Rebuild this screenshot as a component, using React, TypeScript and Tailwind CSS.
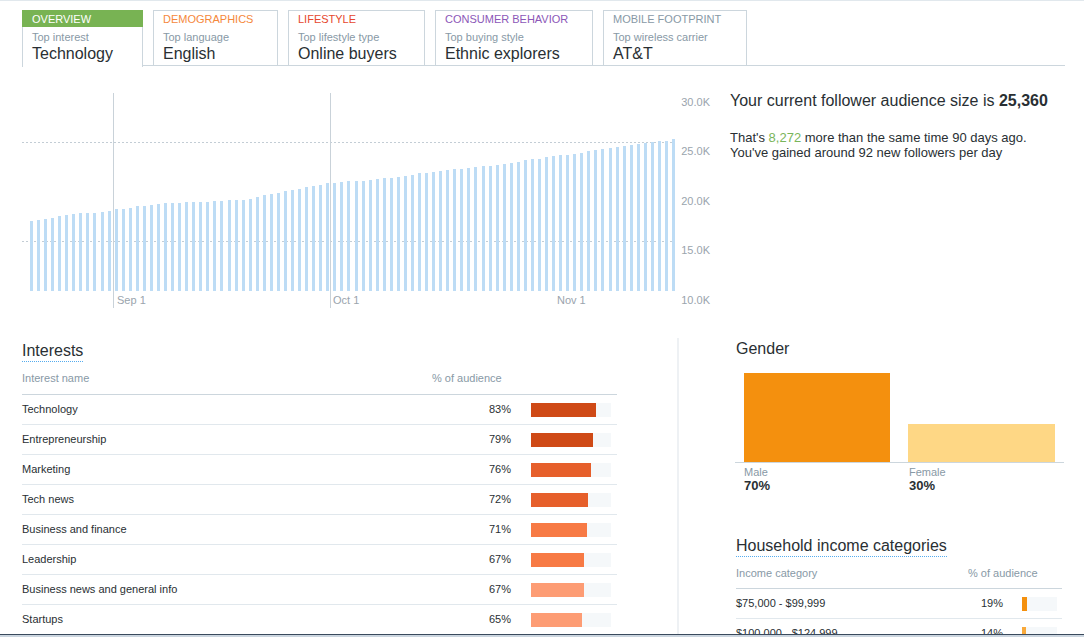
import React from "react";

const tabs = [
  { label: "OVERVIEW", sub: "Top interest", value: "Technology", width: "w-[121px]", color: "text-white", active: true },
  { label: "DEMOGRAPHICS", sub: "Top language", value: "English", width: "w-[125px]", color: "text-[#f5883b]" },
  { label: "LIFESTYLE", sub: "Top lifestyle type", value: "Online buyers", width: "w-[137px]", color: "text-[#e6472d]" },
  { label: "CONSUMER BEHAVIOR", sub: "Top buying style", value: "Ethnic explorers", width: "w-[158px]", color: "text-[#8c57b8]" },
  { label: "MOBILE FOOTPRINT", sub: "Top wireless carrier", value: "AT&T", width: "w-[144px]", color: "text-[#8899a6]" },
];

// daily follower bars, heights in px above the 10K axis
const heights = [
  70, 71, 72, 73, 75, 76, 77, 78, 78, 78, 79, 80, 82, 82, 83, 85, 86, 87, 88, 88, 88, 89, 89, 89, 89, 90, 90, 91, 91, 91,
  92, 94, 96, 97, 98, 100, 101, 102, 104, 105, 106, 108, 108, 109, 110, 110, 111, 112, 113, 113, 114, 115, 116, 118, 118,
  119, 120, 121, 122, 122, 123, 124, 125, 125, 126, 127, 128, 129, 131, 132, 132, 134, 135, 136, 137, 138, 140, 141, 142,
  143, 144, 145, 146, 147, 148, 149, 150, 150, 152,
];
const BAR_COUNT = 92;
const bars = Array.from({ length: BAR_COUNT }, (_, i) => ({
  x: Math.round(30 + (i * 642) / (BAR_COUNT - 1)),
  h: heights[Math.round((i * (heights.length - 1)) / (BAR_COUNT - 1))],
}));

const yTicks = [
  { label: "30.0K", y: 102 },
  { label: "25.0K", y: 151 },
  { label: "20.0K", y: 201 },
  { label: "15.0K", y: 250 },
  { label: "10.0K", y: 300 },
];

const interests = [
  { name: "Technology", pct: 83, color: "#cf4a16" },
  { name: "Entrepreneurship", pct: 79, color: "#cf4a16" },
  { name: "Marketing", pct: 76, color: "#e65f2b" },
  { name: "Tech news", pct: 72, color: "#e65f2b" },
  { name: "Business and finance", pct: 71, color: "#f77a45" },
  { name: "Leadership", pct: 67, color: "#f77a45" },
  { name: "Business news and general info", pct: 67, color: "#fd9c74" },
  { name: "Startups", pct: 65, color: "#fd9c74" },
];

const incomes = [
  { name: "$75,000 - $99,999", pct: 19, color: "#f4900e" },
  { name: "$100,000 - $124,999", pct: 14, color: "#f9a93a" },
];

function Tab({ tab }: { tab: (typeof tabs)[number] }) {
  if (tab.active) {
    return (
      <div className={`${tab.width} h-[57px] shrink-0 flex flex-col bg-white`}>
        <div className="h-[17px] bg-[#78b353] px-[10px] pt-[3px] text-[11px] leading-[13px] text-white">
          {tab.label}
        </div>
        <div className="flex-1 border-x border-[#ccd6dd] px-[9px]">
          <div className="mt-[4px] text-[11px] leading-[13px] text-[#8899a6]">{tab.sub}</div>
          <div className="text-[16px] leading-[20px] text-[#292f33]">{tab.value}</div>
        </div>
      </div>
    );
  }
  return (
    <div className={`${tab.width} h-[56px] shrink-0 border border-[#ccd6dd] bg-white px-[9px]`}>
      <div className={`h-[16px] pt-[2px] text-[11px] leading-[13px] ${tab.color}`}>{tab.label}</div>
      <div className="mt-[4px] text-[11px] leading-[13px] text-[#8899a6]">{tab.sub}</div>
      <div className="text-[16px] leading-[20px] text-[#292f33]">{tab.value}</div>
    </div>
  );
}

function FollowerChart() {
  return (
    <svg width={722} height={235} viewBox="0 80 722 235" className="shrink-0">
      <line x1={22} x2={673} y1={142.5} y2={142.5} stroke="#c3cdd5" strokeDasharray="2 2" />
      <line x1={22} x2={673} y1={241.5} y2={241.5} stroke="#c3cdd5" strokeDasharray="2 2" />
      <line x1={113.5} x2={113.5} y1={93} y2={308} stroke="#c9d2d9" />
      <line x1={330.5} x2={330.5} y1={93} y2={308} stroke="#c9d2d9" />
      {bars.map((b, i) => (
        <rect key={i} x={b.x} y={291 - b.h} width={3} height={b.h} fill="#bddcf5" />
      ))}
      <g fontSize={11} fill="#9aa4ad" fontFamily="'Liberation Sans', Arial, sans-serif">
        <text x={117} y={304}>Sep 1</text>
        <text x={333} y={304}>Oct 1</text>
        <text x={557} y={304}>Nov 1</text>
        {yTicks.map((t) => (
          <text key={t.label} x={710} y={t.y + 4} textAnchor="end">
            {t.label}
          </text>
        ))}
      </g>
    </svg>
  );
}

function SectionTitle({ children }: { children: React.ReactNode }) {
  return (
    <div className="w-fit text-[16px] leading-[20px] text-[#292f33] border-b border-dotted border-[#55acee]">
      {children}
    </div>
  );
}

export default function App() {
  return (
    <div className="h-[637px] flex flex-col overflow-hidden bg-white border-t border-[#e1e8ed] font-['Liberation_Sans',Arial,sans-serif]">
      <div className="flex-1 min-h-0 overflow-hidden">
        {/* segment tabs */}
        <div className="flex items-start pt-[9px] pl-[22px] pr-[19px]">
          <Tab tab={tabs[0]} />
          <div className="flex-1 h-[56px] flex items-start gap-[10px] pl-[10px] border-b border-[#ccd6dd]">
            {tabs.slice(1).map((t) => (
              <Tab key={t.label} tab={t} />
            ))}
          </div>
        </div>

        {/* follower growth */}
        <div className="flex mt-[13px]">
          <FollowerChart />
          <div className="pl-[8px] pt-[11px] text-[#292f33]">
            <div className="text-[16px] leading-[20px]">
              Your current follower audience size is <span className="font-bold">25,360</span>
            </div>
            <div className="mt-[19px] text-[13px] leading-[15px]">
              That's <span className="text-[#79b55a]">8,272</span> more than the same time 90 days ago.
            </div>
            <div className="text-[13px] leading-[15px]">You've gained around 92 new followers per day</div>
          </div>
        </div>

        <div className="flex mt-[23px]">
          {/* interests table */}
          <div className="ml-[22px] w-[595px] pt-[3px] shrink-0">
            <SectionTitle>Interests</SectionTitle>
            <div className="flex pt-[10px] pb-[9px] border-b border-[#ccd6dd] text-[11px] leading-[13px] text-[#8899a6]">
              <div className="flex-1">Interest name</div>
              <div className="w-[185px]">% of audience</div>
            </div>
            {interests.map((r) => (
              <div key={r.name} className="h-[30px] flex items-center border-b border-[#e1e8ed] text-[11px] text-[#292f33]">
                <div className="flex-1">{r.name}</div>
                <div className="w-[80px] text-right">{r.pct}%</div>
                <div className="ml-[20px] mr-[6px] w-[80px] h-[14px] bg-[#f5f8fa]">
                  <div className="h-full" style={{ width: Math.round(r.pct * 0.785), backgroundColor: r.color }} />
                </div>
              </div>
            ))}
          </div>

          <div className="ml-[60px] w-[2px] shrink-0 bg-[#eef1f4]" />

          <div className="ml-[56px] w-[329px] shrink-0">
            <div className="pl-[1px] pt-[1px] text-[16px] leading-[20px] text-[#292f33]">Gender</div>
            <div className="mt-[13px] h-[91px] flex items-end gap-[18px] px-[9px] border-b border-[#ccd6dd]">
              <div className="w-[146px] h-[89px] bg-[#f4900e]" />
              <div className="w-[147px] h-[38px] bg-[#fed785]" />
            </div>
            <div className="flex gap-[18px] px-[9px] pt-[3px]">
              <div className="w-[146px]">
                <div className="text-[11px] leading-[13px] text-[#8899a6]">Male</div>
                <div className="text-[13px] leading-[14px] font-bold text-[#292f33]">70%</div>
              </div>
              <div className="w-[147px] pl-[1px]">
                <div className="text-[11px] leading-[13px] text-[#8899a6]">Female</div>
                <div className="text-[13px] leading-[14px] font-bold text-[#292f33]">30%</div>
              </div>
            </div>

            {/* household income table */}
            <div className="mt-[43px] ml-[1px] mr-[2px]">
              <SectionTitle>Household income categories</SectionTitle>
              <div className="flex pt-[10px] pb-[8px] border-b border-[#ccd6dd] text-[11px] leading-[13px] text-[#8899a6]">
                <div className="flex-1">Income category</div>
                <div className="w-[94px]">% of audience</div>
              </div>
              {incomes.map((r) => (
                <div key={r.name} className="h-[30px] flex items-center border-b border-[#e1e8ed] text-[11px] text-[#292f33]">
                  <div className="flex-1">{r.name}</div>
                  <div className="w-[60px] text-right">{r.pct}%</div>
                  <div className="ml-[19px] mr-[5px] w-[35px] h-[14px] bg-[#f5f8fa]">
                    <div className="h-full" style={{ width: Math.round(r.pct * 0.28), backgroundColor: r.color }} />
                  </div>
                </div>
              ))}
            </div>
          </div>
        </div>
      </div>
      <div className="h-[3px] shrink-0 border-t border-[#3a4a5c] bg-[#cbd5df]" />
    </div>
  );
}
